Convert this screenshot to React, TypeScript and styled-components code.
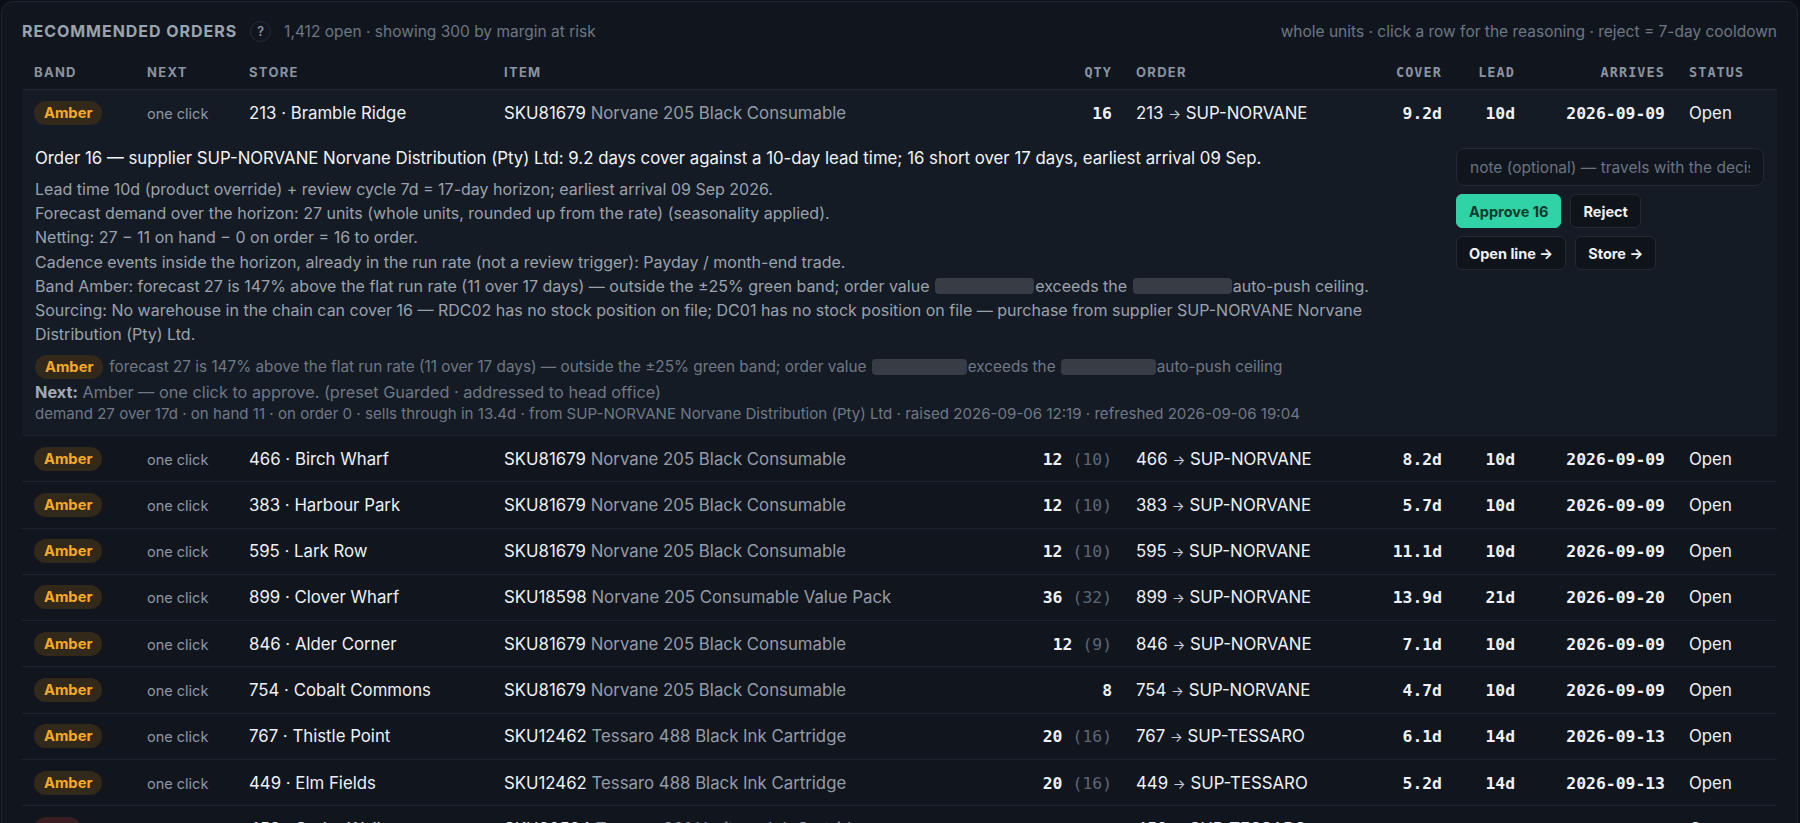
import React from 'react';
import styled, { createGlobalStyle } from 'styled-components';

const GlobalStyle = createGlobalStyle`
  * { box-sizing: border-box; }
  html, body {
    margin: 0;
    padding: 0;
    background: #0c1016;
  }
  body {
    font-family: Inter, 'Noto Sans', sans-serif;
    color: #e6eaf0;
    overflow: hidden;
  }
`;

const COLS = '113px 102px 255px 522px 110px 255px 75px 73px 150px 101px';
const MONO = "'DejaVu Sans Mono', 'Liberation Mono', monospace";

const Panel = styled.section`
  margin: 1px 2px 0 1px;
  border: 1px solid #1e2530;
  border-radius: 12px;
  background: #11161e;
  padding: 17px 20px 0 20px;
`;

const TitleBar = styled.div`
  display: flex;
  align-items: center;
  justify-content: space-between;
  height: 24px;
`;

const TitleLeft = styled.div`
  display: flex;
  align-items: center;
  gap: 13px;
`;

const Title = styled.h2`
  margin: 0;
  font-size: 16px;
  font-weight: 700;
  letter-spacing: 0.06em;
  color: #9ba3ae;
`;

const HelpDot = styled.span`
  display: inline-flex;
  align-items: center;
  justify-content: center;
  width: 21px;
  height: 21px;
  border-radius: 50%;
  border: 1px solid #262d38;
  font-size: 12.5px;
  font-weight: 600;
  color: #8a93a0;
`;

const Muted = styled.span`
  font-size: 15.5px;
  color: #6d7683;
`;

const HeadRow = styled.div`
  display: grid;
  grid-template-columns: ${COLS};
  align-items: center;
  height: 36px;
  margin-top: 11px;
  border-bottom: 1px solid #1e2530;
`;

const HeadCell = styled.div<{ $mono?: boolean; $right?: boolean }>`
  padding: 0 12px;
  font-family: ${(p) => (p.$mono ? MONO : 'inherit')};
  font-size: ${(p) => (p.$mono ? '13.5px' : '13px')};
  font-weight: 700;
  letter-spacing: ${(p) => (p.$mono ? '0.08em' : '0.1em')};
  color: #8a93a0;
  text-align: ${(p) => (p.$right ? 'right' : 'left')};
`;

const Row = styled.div<{ $open?: boolean }>`
  display: grid;
  grid-template-columns: ${COLS};
  align-items: center;
  height: 46.3px;
  border-bottom: 1px solid ${(p) => (p.$open ? 'transparent' : '#1c232d')};
  background: ${(p) => (p.$open ? '#151b24' : 'transparent')};
`;

const Cell = styled.div<{ $right?: boolean }>`
  padding: 0 12px;
  font-size: 16.8px;
  color: #eef1f5;
  white-space: nowrap;
  overflow: hidden;
  text-align: ${(p) => (p.$right ? 'right' : 'left')};
`;

const Num = styled.span`
  font-family: ${MONO};
  font-size: 16.4px;
  font-weight: 700;
  color: #eef1f5;
`;

const Dim = styled.span`
  font-family: ${MONO};
  font-size: 16.4px;
  color: #5e6673;
  margin-left: 10px;
`;

const Band = styled.span<{ $tone: 'amber' | 'red' }>`
  display: inline-flex;
  align-items: center;
  height: 24px;
  padding: 0 10px;
  border-radius: 12px;
  font-size: 14.7px;
  font-weight: 700;
  color: ${(p) => (p.$tone === 'amber' ? '#f5a927' : '#f26b6b')};
  background: ${(p) => (p.$tone === 'amber' ? '#33291a' : '#3a1d22')};
`;

const Next = styled.span`
  font-size: 14.5px;
  color: #8e97a3;
`;

const ItemName = styled.span`
  color: #949ca8;
`;

const Arrow = styled.span`
  font-size: 0.8em;
  color: #c9ced6;
`;

const Detail = styled.div`
  display: grid;
  grid-template-columns: 1fr 308px;
  column-gap: 40px;
  padding: 10px 13px 10px 13px;
  background: #151b24;
  border-bottom: 1px solid #1c232d;
`;

const Story = styled.div`
  display: flex;
  flex-direction: column;
`;

const Headline = styled.div`
  font-size: 16.8px;
  line-height: 24px;
  color: #f1f4f7;
  margin-bottom: 7px;
`;

const Para = styled.div`
  font-size: 16px;
  line-height: 24.1px;
  color: #9aa2ad;
`;

const Redacted = styled.span`
  display: inline-block;
  width: 6.2em;
  height: 1em;
  margin: 0 1px;
  border-radius: 4px;
  background: #383d45;
  vertical-align: -0.15em;
`;

const BandLine = styled.div`
  display: flex;
  align-items: center;
  gap: 6px;
  margin-top: 9px;
  font-size: 15.3px;
  color: #6f7885;
`;

const Small = styled.div<{ $size: number; $gap?: number }>`
  margin-top: ${(p) => p.$gap ?? 0}px;
  font-size: ${(p) => p.$size}px;
  line-height: 22px;
  color: #6f7885;
`;

const Strong = styled.b`
  color: #a2aab5;
  font-weight: 700;
`;

const Actions = styled.div`
  display: flex;
  flex-direction: column;
  gap: 8px;
  padding-top: 2px;
`;

const Note = styled.input`
  width: 100%;
  height: 38px;
  padding: 0 13px;
  border: 1px solid #232a35;
  border-radius: 8px;
  background: #11161e;
  font-family: inherit;
  font-size: 15.5px;
  color: #dfe3e8;
  outline: none;
  &::placeholder { color: #6a7380; }
`;

const ButtonRow = styled.div`
  display: flex;
  gap: 9px;
`;

const Button = styled.button<{ $primary?: boolean }>`
  height: 34px;
  padding: 0 12px;
  border-radius: 6px;
  border: 1px solid ${(p) => (p.$primary ? '#2fd3a5' : '#232a35')};
  background: ${(p) => (p.$primary ? '#2fd3a5' : '#0f141b')};
  color: ${(p) => (p.$primary ? '#0c3a2c' : '#eef1f5')};
  font-family: inherit;
  font-size: 14.5px;
  font-weight: 700;
`;

type Order = {
  band: 'amber' | 'red';
  store: string;
  sku: string;
  item: string;
  qty: string;
  was?: string;
  supplier: string;
  cover: string;
  lead: string;
  arrives: string;
};

const orders: Order[] = [
  { band: 'amber', store: '213 · Bramble Ridge', sku: 'SKU81679', item: 'Norvane 205 Black Consumable', qty: '16', supplier: 'SUP-NORVANE', cover: '9.2d', lead: '10d', arrives: '2026-09-09' },
  { band: 'amber', store: '466 · Birch Wharf', sku: 'SKU81679', item: 'Norvane 205 Black Consumable', qty: '12', was: '10', supplier: 'SUP-NORVANE', cover: '8.2d', lead: '10d', arrives: '2026-09-09' },
  { band: 'amber', store: '383 · Harbour Park', sku: 'SKU81679', item: 'Norvane 205 Black Consumable', qty: '12', was: '10', supplier: 'SUP-NORVANE', cover: '5.7d', lead: '10d', arrives: '2026-09-09' },
  { band: 'amber', store: '595 · Lark Row', sku: 'SKU81679', item: 'Norvane 205 Black Consumable', qty: '12', was: '10', supplier: 'SUP-NORVANE', cover: '11.1d', lead: '10d', arrives: '2026-09-09' },
  { band: 'amber', store: '899 · Clover Wharf', sku: 'SKU18598', item: 'Norvane 205 Consumable Value Pack', qty: '36', was: '32', supplier: 'SUP-NORVANE', cover: '13.9d', lead: '21d', arrives: '2026-09-20' },
  { band: 'amber', store: '846 · Alder Corner', sku: 'SKU81679', item: 'Norvane 205 Black Consumable', qty: '12', was: '9', supplier: 'SUP-NORVANE', cover: '7.1d', lead: '10d', arrives: '2026-09-09' },
  { band: 'amber', store: '754 · Cobalt Commons', sku: 'SKU81679', item: 'Norvane 205 Black Consumable', qty: '8', supplier: 'SUP-NORVANE', cover: '4.7d', lead: '10d', arrives: '2026-09-09' },
  { band: 'amber', store: '767 · Thistle Point', sku: 'SKU12462', item: 'Tessaro 488 Black Ink Cartridge', qty: '20', was: '16', supplier: 'SUP-TESSARO', cover: '6.1d', lead: '14d', arrives: '2026-09-13' },
  { band: 'amber', store: '449 · Elm Fields', sku: 'SKU12462', item: 'Tessaro 488 Black Ink Cartridge', qty: '20', was: '16', supplier: 'SUP-TESSARO', cover: '5.2d', lead: '14d', arrives: '2026-09-13' },
  { band: 'red', store: '452 · Cedar Walk', sku: 'SKU30594', item: 'Tessaro 301 Heritage Ink Cartridge', qty: '18', supplier: 'SUP-TESSARO', cover: '4.4d', lead: '14d', arrives: '2026-09-13' },
];

const OrderRow = ({ o, open }: { o: Order; open?: boolean }) => (
  <Row $open={open}>
    <Cell>
      <Band $tone={o.band}>{o.band === 'amber' ? 'Amber' : 'Red'}</Band>
    </Cell>
    <Cell>
      <Next>one click</Next>
    </Cell>
    <Cell>{o.store}</Cell>
    <Cell>
      {o.sku} <ItemName>{o.item}</ItemName>
    </Cell>
    <Cell $right>
      <Num>{o.qty}</Num>
      {o.was && <Dim>({o.was})</Dim>}
    </Cell>
    <Cell>
      {o.store.split(' ')[0]} <Arrow>→</Arrow> {o.supplier}
    </Cell>
    <Cell $right>
      <Num>{o.cover}</Num>
    </Cell>
    <Cell $right>
      <Num>{o.lead}</Num>
    </Cell>
    <Cell $right>
      <Num>{o.arrives}</Num>
    </Cell>
    <Cell>Open</Cell>
  </Row>
);

const Reasoning = () => (
  <Detail>
    <Story>
      <Headline>
        Order 16 — supplier SUP-NORVANE Norvane Distribution (Pty) Ltd: 9.2 days cover against a 10-day lead
        time; 16 short over 17 days, earliest arrival 09 Sep.
      </Headline>
      <Para>Lead time 10d (product override) + review cycle 7d = 17-day horizon; earliest arrival 09 Sep 2026.</Para>
      <Para>Forecast demand over the horizon: 27 units (whole units, rounded up from the rate) (seasonality applied).</Para>
      <Para>Netting: 27 − 11 on hand − 0 on order = 16 to order.</Para>
      <Para>
        Cadence events inside the horizon, already in the run rate (not a review trigger): Payday / month-end trade.
      </Para>
      <Para>
        Band Amber: forecast 27 is 147% above the flat run rate (11 over 17 days) — outside the ±25% green band;
        order value <Redacted />exceeds the <Redacted />auto-push ceiling.
      </Para>
      <Para>
        Sourcing: No warehouse in the chain can cover 16 — RDC02 has no stock position on file; DC01 has no stock
        position on file — purchase from supplier SUP-NORVANE Norvane Distribution (Pty) Ltd.
      </Para>
      <BandLine>
        <Band $tone="amber">Amber</Band>
        <span>
          forecast 27 is 147% above the flat run rate (11 over 17 days) — outside the ±25% green band; order value{' '}
          <Redacted />exceeds the <Redacted />auto-push ceiling
        </span>
      </BandLine>
      <Small $size={16.3} $gap={2}>
        <Strong>Next:</Strong> Amber — one click to approve. (preset Guarded · addressed to head office)
      </Small>
      <Small $size={15.1}>
        demand 27 over 17d · on hand 11 · on order 0 · sells through in 13.4d · from SUP-NORVANE Norvane
        Distribution (Pty) Ltd · raised 2026-09-06 12:19 · refreshed 2026-09-06 19:04
      </Small>
    </Story>
    <Actions>
      <Note placeholder="note (optional) — travels with the decision" />
      <ButtonRow>
        <Button $primary>Approve 16</Button>
        <Button>Reject</Button>
      </ButtonRow>
      <ButtonRow>
        <Button>Open line →</Button>
        <Button>Store →</Button>
      </ButtonRow>
    </Actions>
  </Detail>
);

export default function App() {
  const [first, ...rest] = orders;
  return (
    <>
      <GlobalStyle />
      <Panel>
        <TitleBar>
          <TitleLeft>
            <Title>RECOMMENDED ORDERS</Title>
            <HelpDot>?</HelpDot>
            <Muted>1,412 open · showing 300 by margin at risk</Muted>
          </TitleLeft>
          <Muted>whole units · click a row for the reasoning · reject = 7-day cooldown</Muted>
        </TitleBar>
        <HeadRow>
          <HeadCell>BAND</HeadCell>
          <HeadCell>NEXT</HeadCell>
          <HeadCell>STORE</HeadCell>
          <HeadCell>ITEM</HeadCell>
          <HeadCell $mono $right>QTY</HeadCell>
          <HeadCell>ORDER</HeadCell>
          <HeadCell $mono $right>COVER</HeadCell>
          <HeadCell $mono $right>LEAD</HeadCell>
          <HeadCell $mono $right>ARRIVES</HeadCell>
          <HeadCell $mono>STATUS</HeadCell>
        </HeadRow>
        <OrderRow o={first} open />
        <Reasoning />
        {rest.map((o) => (
          <OrderRow key={o.store} o={o} />
        ))}
      </Panel>
    </>
  );
}
